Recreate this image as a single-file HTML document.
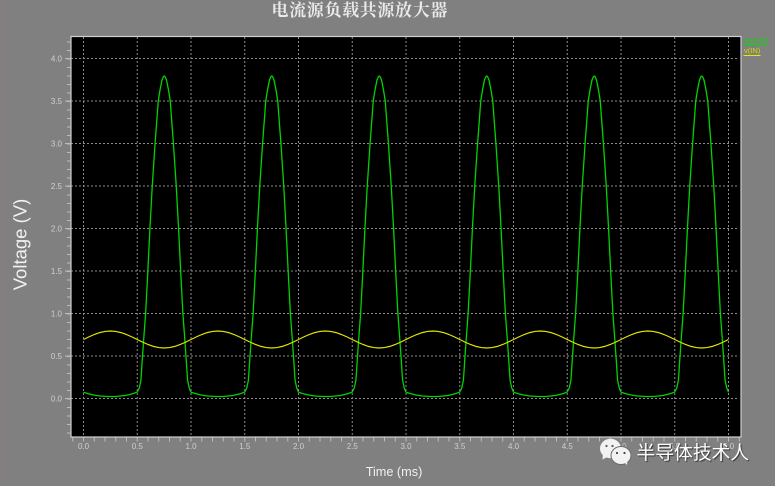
<!DOCTYPE html>
<html lang="zh"><head><meta charset="utf-8"><title>电流源负载共源放大器</title>
<style>
html,body{margin:0;padding:0;background:#808080;width:775px;height:486px;overflow:hidden}
svg{display:block}
.s{font-family:"Liberation Sans",sans-serif}
.t{font-size:8px;fill:#c8d0d8}
</style></head><body>
<svg width="775" height="486" viewBox="0 0 775 486" xmlns="http://www.w3.org/2000/svg">
<defs>
<path id="g" fill="none" stroke="#00d400" stroke-width="1.3" d="M0 392.3L5 393.8L10 395L16.5 396L25 396.5L32 396.5L42 395.5L50 393.5L53.75 392L55.75 388L57.45 380L58.75 360L60.15 340L62.15 313L64.35 271L66.45 228L68.75 186L71.55 144L74.75 101L76.5 90L78.5 80L80 76.5L80.75 76L81.5 76.5L83 80L85 90L86.75 101L89.95 144L92.75 186L95.05 228L97.15 271L99.35 313L101.35 340L102.75 360L104.05 380L105.75 388L107.5 392.3"/>
<path id="y" fill="none" stroke="#e4e400" stroke-width="1.2" d="M0 339.5L5.375 336.87L10.75 334.5L16.125 332.62L21.5 331.42L26.875 331L32.25 331.42L37.625 332.62L43 334.5L48.375 336.87L53.75 339.5L59.125 342.13L64.5 344.5L69.875 346.38L75.25 347.58L80.625 348L86 347.58L91.375 346.38L96.75 344.5L102.125 342.13L107.5 339.5"/>
</defs>
<rect width="775" height="486" fill="#808080"/>
<rect x="0" y="0" width="1" height="486" fill="#8c7c7c"/>
<rect x="71" y="36" width="670" height="401" fill="#000"/>
<!-- grid -->
<g stroke="#8c8c8c" stroke-width="1" stroke-dasharray="2 2" fill="none">
<path d="M71 58.5H739M71 101H739M71 143.5H739M71 186H739M71 228.5H739M71 271H739M71 313.5H739M71 356H739M71 398.5H739"/>
<path d="M83.5 37V437M137.25 37V437M191 37V437M244.75 37V437M298.5 37V437M352.25 37V437M406 37V437M459.75 37V437M513.5 37V437M567.25 37V437M621 37V437M674.75 37V437M728.5 37V437"/>
</g>
<!-- frame -->
<rect x="71" y="36.5" width="670" height="400.5" fill="none" stroke="#d0d0d0" stroke-width="1.2"/>
<!-- ticks -->
<g fill="none" stroke="#bcbcbc">
<path d="M69 41.5V434" stroke-width="4" stroke-dasharray="1 7.5"/>
<path d="M65 58.5H71M65 101H71M65 143.5H71M65 186H71M65 228.5H71M65 271H71M65 313.5H71M65 356H71M65 398.5H71" stroke-width="1"/>
<path d="M72.25 439.5H740" stroke-width="4" stroke-dasharray="1 9.75"/>
</g>
<!-- traces -->
<g transform="translate(83.5 0)">
<use href="#g"/><use href="#g" x="107.5"/><use href="#g" x="215"/><use href="#g" x="322.5"/><use href="#g" x="430"/><use href="#g" x="537.5"/>
<use href="#y"/><use href="#y" x="107.5"/><use href="#y" x="215"/><use href="#y" x="322.5"/><use href="#y" x="430"/><use href="#y" x="537.5"/>
</g>
<!-- y labels -->
<g class="s t" text-anchor="end">
<text x="62" y="61.5">4.0</text><text x="62" y="104">3.5</text><text x="62" y="146.5">3.0</text><text x="62" y="189">2.5</text><text x="62" y="231.5">2.0</text><text x="62" y="274">1.5</text><text x="62" y="316.5">1.0</text><text x="62" y="359">0.5</text><text x="62" y="401.5">0.0</text>
</g>
<!-- x labels -->
<g class="s t" text-anchor="middle">
<text x="83.5" y="449">0.0</text><text x="137.25" y="449">0.5</text><text x="191" y="449">1.0</text><text x="244.75" y="449">1.5</text><text x="298.5" y="449">2.0</text><text x="352.25" y="449">2.5</text><text x="406" y="449">3.0</text><text x="459.75" y="449">3.5</text><text x="513.5" y="449">4.0</text><text x="567.25" y="449">4.5</text><text x="621" y="449">5.0</text><text x="674.75" y="449">5.5</text><text x="728.5" y="449">6.0</text>
</g>
<!-- legend -->
<text class="s" x="744" y="43" font-size="7.5" fill="#00e000">v(OUT)</text>
<rect x="743.5" y="44" width="23" height="1" fill="#00e000"/>
<text class="s" x="744" y="53" font-size="7.5" fill="#d8d800">v(IN)</text>
<rect x="743.5" y="55" width="17" height="1" fill="#e8e800"/>
<!-- titles -->
<text x="271.5" y="16" font-size="17" letter-spacing="0.65" font-weight="700" fill="#eaeaea" font-family="'Liberation Serif','Noto Serif CJK SC',serif">电流源负载共源放大器</text>
<text class="s" transform="translate(26.5 244.5) rotate(-90)" text-anchor="middle" font-size="18.5" fill="#f2f2f2">Voltage (V)</text>
<text class="s" x="394" y="476" text-anchor="middle" font-size="12.7" fill="#f0f0f0">Time (ms)</text>
<!-- watermark -->
<g>
<path d="M603 453L602.5 459.5L609 456Z" fill="#f2f2f2"/>
<ellipse cx="610.5" cy="448.5" rx="10.5" ry="9.7" fill="#f2f2f2"/>
<ellipse cx="621" cy="455.5" rx="10" ry="9" fill="#f2f2f2" stroke="#6a6a6a" stroke-width="1"/>
<path d="M624 462L627 465L627.5 459Z" fill="#f2f2f2"/>
<circle cx="606.5" cy="446" r="1.1" fill="#555"/><circle cx="612.5" cy="446" r="1.1" fill="#555"/>
<circle cx="617" cy="453" r="1.1" fill="#444"/><circle cx="624.5" cy="453" r="1.1" fill="#444"/>
</g>
<text x="636.5" y="459" font-size="18.8" fill="#fff" font-family="'Liberation Sans','Noto Sans CJK SC',sans-serif" style="text-shadow:1px 1px 1px #333">半导体技术人</text>
</svg>
</body></html>
